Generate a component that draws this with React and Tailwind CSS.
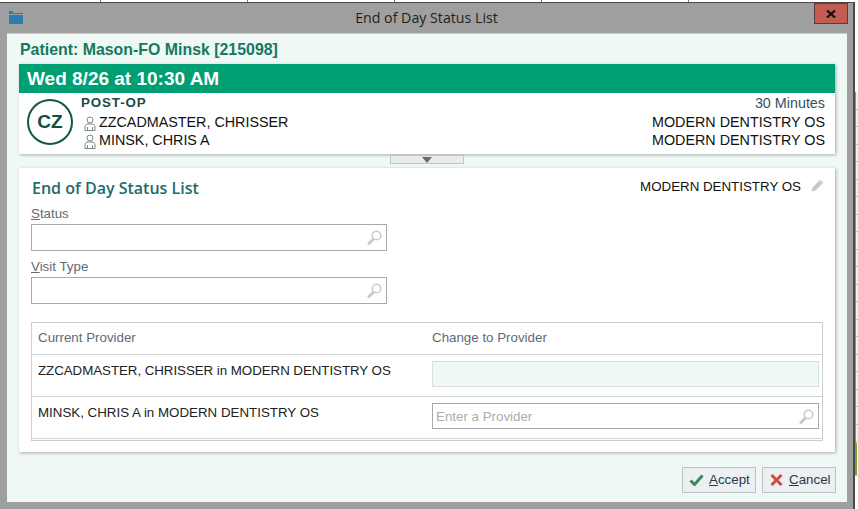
const sans = "font-['Liberation_Sans',Arial,sans-serif]";

function Person() {
  return (
    <svg width="12" height="15" viewBox="0 0 12 15" fill="none" stroke="#7b888d" strokeWidth="1" className="shrink-0">
      <circle cx="6" cy="4" r="3" />
      <path d="M1 14.500V11c0-2 1.500-3 3-3h4c1.500 0 3 1 3 3v3.500H1zM3.500 14.500V11M8.500 14.500V11" />
    </svg>
  );
}

function Search() {
  return (
    <svg width="15" height="15" viewBox="0 0 15 15" fill="none" className="shrink-0">
      <circle cx="9.500" cy="5.500" r="4.300" stroke="#c6cbce" strokeWidth="1.600" />
      <path d="M6 9.500 L2 13.500" stroke="#c6cbce" strokeWidth="3" strokeLinecap="round" />
    </svg>
  );
}

function SearchInput({ placeholder, className }) {
  return (
    <div className={`flex items-center justify-between border border-[#a9a9a9] bg-white pl-[3px] pr-[4px] ${className}`}>
      <span className="text-[13.330px] text-[#adadad] pt-[1px]">{placeholder}</span>
      <Search />
    </div>
  );
}

function Field({ letter, rest, className }) {
  return (
    <div className={className}>
      <div className="h-[16px] text-[13.330px] leading-[16px] text-[#5f6b72]">
        <span className="underline">{letter}</span>
        {rest}
      </div>
      <SearchInput className="w-[356px] h-[27px] mt-[2px]" />
    </div>
  );
}

function TopCell({ w }) {
  return <div className={`h-full border-r border-[#777] ${w}`} />;
}

function Button({ icon, letter, rest, w }) {
  return (
    <div className={`flex items-center h-[26px] border border-[#bcc2c5] bg-[#ecf0f3] text-[13.330px] text-[#2b3a42] ${w}`}>
      <span className="w-[26px] flex justify-center shrink-0">{icon}</span>
      <span><span className="underline">{letter}</span>{rest}</span>
    </div>
  );
}

export default function App() {
  return (
    <div className={`${sans} w-[858px] h-[509px] overflow-hidden bg-white flex`}>
      <div className="w-[855px] h-full flex flex-col">
        <div className="h-[2px] flex shrink-0 bg-white">
          <TopCell w="w-[101px]" />
          <TopCell w="w-[147px]" />
          <TopCell w="w-[147px]" />
          <TopCell w="w-[147px]" />
          <TopCell w="w-[147px]" />
        </div>
        <div className="flex-1 border-t border-r-2 border-[#4a4a4a] bg-[#9f9f9f] flex flex-col min-h-0">
          <div className="h-[30px] shrink-0 grid grid-cols-[1fr_auto_1fr]">
            <div className="pl-[9px] pt-[8px]">
              <svg width="14" height="13" viewBox="0 0 14 13">
                <path d="M0 0h4v2H14v1H0z" fill="#2f7bab" />
                <path d="M0 4h14v9H0z" fill="#2f7bab" />
              </svg>
            </div>
            <div className="font-['Open_Sans',sans-serif] text-[14.200px] leading-[30px] text-[#1f1f1f]">End of Day Status List</div>
            <div className="flex justify-end pr-[5px]">
              <div className="w-[34px] h-[21px] bg-[#c25b52] border border-[#5c3a38] flex items-center justify-center">
                <svg width="10" height="8" viewBox="0 0 10 8"><path d="M1 0.500 9 7.500M9 0.500 1 7.500" stroke="#111" strokeWidth="2.200" /></svg>
              </div>
            </div>
          </div>

          <div className="mx-[7px] w-[840px] h-[469px] shrink-0 bg-[#eff8f5] border-t border-[#bcd2e0] flex flex-col pl-[12px] pr-[12px]">
            <div className="h-[30px] pt-[6px] pl-[1px] text-[15.900px] font-bold leading-[19px] text-[#16795f]">Patient: Mason-FO Minsk [215098]</div>

            <div className="h-[90px] shrink-0 bg-white shadow-[1px_1px_3px_rgba(0,0,0,0.3)] flex flex-col">
              <div className="h-[29px] shrink-0 bg-[#009e73] text-white font-bold text-[19px] leading-[29px] pl-[8px]">Wed 8/26 at 10:30 AM</div>
              <div className="flex-1 flex">
                <div className="w-[46px] h-[46px] mt-[6px] ml-[8px] rounded-full border-2 border-[#0f5a47] flex items-center justify-center text-[19px] font-bold text-[#0f4f40] shrink-0">CZ</div>
                <div className="ml-[8px] flex-1 flex flex-col">
                  <div className="h-[21px] text-[13.330px] font-bold tracking-[0.9px] text-[#1b4a4a] leading-[20px]">POST-OP</div>
                  <div className="h-[18px] flex items-center gap-[3px] text-[14.330px] text-[#111]"><span className="ml-[3px]"><Person /></span>ZZCADMASTER, CHRISSER</div>
                  <div className="h-[18px] flex items-center gap-[3px] text-[14.330px] text-[#111]"><span className="ml-[3px]"><Person /></span>MINSK, CHRIS A</div>
                </div>
                <div className="pr-[10px] flex flex-col items-end">
                  <div className="h-[20px] text-[14.330px] leading-[20px] text-[#33525a]">30 Minutes</div>
                  <div className="h-[18px] text-[14.330px] leading-[18px] text-[#111]">MODERN DENTISTRY OS</div>
                  <div className="h-[18px] text-[14.330px] leading-[18px] text-[#111]">MODERN DENTISTRY OS</div>
                </div>
              </div>
            </div>

            <div className="h-[14px] shrink-0 flex justify-center">
              <div className="w-[74px] h-[9px] ml-[-1px] mt-[1px] bg-[#e8ecee] border border-[#c0c5c5] flex justify-center pt-[1px]">
                <svg width="10" height="6" viewBox="0 0 10 6"><path d="M0 0h10L5 6z" fill="#6a6a6a" /></svg>
              </div>
            </div>

            <div className="h-[284px] shrink-0 bg-white shadow-[1px_1px_3px_rgba(0,0,0,0.3)] pl-[12px] pr-[12px] flex flex-col">
              <div className="h-[38px] flex justify-between shrink-0">
                <div className="font-['Open_Sans',sans-serif] font-semibold text-[16px] text-[#1d6b6d] leading-[22px] pt-[9px] pl-[1px]">End of Day Status List</div>
                <div className="flex items-start gap-[10px] pt-[10px] mr-[-1px] text-[13.330px] leading-[16px] text-[#111]">
                  <span className="mt-[1px]">MODERN DENTISTRY OS</span>
                  <svg width="13" height="13" viewBox="0 0 13 13" className="mt-[1px]">
                    <path d="M0.500 12.500 1.500 8.500 8.500 1.500 11.500 4.500 4.500 11.500z" fill="#c4c9cb" />
                    <path d="M9.500 0.500 12.500 3.500 11.800 4.200 8.800 1.200z" fill="#c4c9cb" />
                  </svg>
                </div>
              </div>
              <Field letter="S" rest="tatus" />
              <Field letter="V" rest="isit Type" className="mt-[8px]" />

              <div className="mt-[18px] w-[792px] h-[119px] border border-[#cccfcf] flex flex-col shrink-0 text-[13.330px]">
                <div className="h-[32px] shrink-0 grid grid-cols-[400px_1fr] border-b border-[#cfd3d3] text-[#5f6b72] leading-[30px]">
                  <div className="pl-[6px]">Current Provider</div>
                  <div>Change to Provider</div>
                </div>
                <div className="h-[42px] shrink-0 grid grid-cols-[400px_1fr] border-b border-[#cfd3d3] text-[#222] pr-[3px]">
                  <div className="pl-[6px] pt-[8px] leading-[16px] tracking-[-0.05px]">ZZCADMASTER, CHRISSER in MODERN DENTISTRY OS</div>
                  <div className="pt-[6px]"><div className="h-[26px] bg-[#eff8f5] border border-[#d8dedc]" /></div>
                </div>
                <div className="h-[42px] shrink-0 grid grid-cols-[400px_1fr] border-b border-[#cfd3d3] text-[#222] pr-[3px]">
                  <div className="pl-[6px] pt-[8px] leading-[16px]">MINSK, CHRIS A in MODERN DENTISTRY OS</div>
                  <div className="pt-[6px]"><SearchInput className="h-[26px]" placeholder="Enter a Provider" /></div>
                </div>
              </div>
            </div>

            <div className="flex-1 flex justify-end items-start gap-[6px] pt-[15px] mr-[-1px]">
              <Button
                w="w-[74px]"
                letter="A"
                rest="ccept"
                icon={<svg width="15" height="12" viewBox="0 0 15 12"><path d="M1.500 6.500 5.500 10.500 13.500 1.500" fill="none" stroke="#3a8a5e" strokeWidth="3" /></svg>}
              />
              <Button
                w="w-[74px]"
                letter="C"
                rest="ancel"
                icon={<svg width="13" height="12" viewBox="0 0 13 12"><path d="M1.500 1 11.500 11M11.500 1 1.500 11" fill="none" stroke="#c9543c" strokeWidth="3" /></svg>}
              />
            </div>
          </div>
        </div>
      </div>

      <div className="w-[3px] h-full flex flex-col">
        <div className="h-[92px] shrink-0 bg-white" />
        <div className="h-[351px] shrink-0 border-l border-[#8a9a60] bg-[#f4f1e6] flex flex-col overflow-hidden">
          {[...Array(20)].map((_, i) => <div key={i} className="h-[17.500px] shrink-0 border-b border-[#c8c8c8]" />)}
        </div>
        <div className="h-[32px] shrink-0 border-l-2 border-[#6fa52d] bg-white" />
        <div className="flex-1 bg-white border-t border-[#c8c8c8]" />
      </div>
    </div>
  );
}
